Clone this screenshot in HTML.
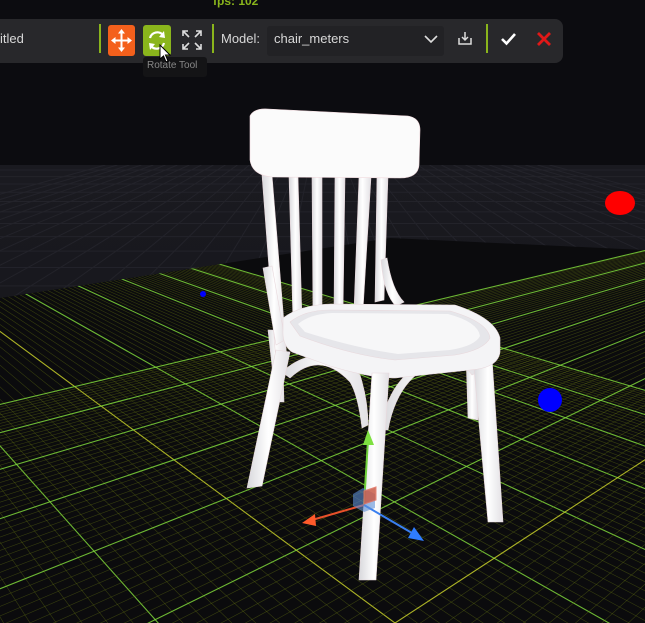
<!DOCTYPE html>
<html><head><meta charset="utf-8"><style>
html,body{margin:0;padding:0;background:#0c0c10;width:645px;height:623px;overflow:hidden;font-family:"Liberation Sans",sans-serif;position:relative}
#s{position:absolute;left:0;top:0}
.tb{position:absolute;left:-10px;top:19px;width:573px;height:44px;background:#28282b;border-radius:8px;}
.t{position:absolute;color:#d8d8d8;font-size:13px}
.sep{position:absolute;top:24px;width:2px;height:29px;background:#8ab51c}
</style></head><body>
<svg id="s" width="645" height="623" viewBox="0 0 645 623" xmlns="http://www.w3.org/2000/svg">
<defs>
<linearGradient id="fl" x1="0" y1="0" x2="0" y2="1"><stop offset="0" stop-color="#1a1a20"/><stop offset="1" stop-color="#121216"/></linearGradient>
<clipPath id="gc"><polygon points="0,298 390,238 645,250 645,623 0,623"/></clipPath>
<clipPath id="fc"><rect x="0" y="165" width="645" height="140"/></clipPath>
<linearGradient id="lg" x1="0" y1="0" x2="1" y2="0"><stop offset="0" stop-color="#d8d8dc"/><stop offset=".5" stop-color="#fff"/><stop offset="1" stop-color="#e2e0e4"/></linearGradient>
</defs>
<rect x="0" y="0" width="645" height="165" fill="#0c0c10"/>
<rect x="0" y="165" width="645" height="458" fill="url(#fl)"/>
<g id="far" clip-path="url(#fc)" stroke="#2a2a32" stroke-width="1" opacity=".6"></g>
<polygon points="0,298 390,238 645,250 645,623 0,623" fill="#0b0b0d"/>
<g id="grid" clip-path="url(#gc)"></g>
<ellipse cx="620" cy="203" rx="15" ry="12" fill="#f00"/>
<circle cx="550" cy="400" r="12" fill="#00f"/>
<circle cx="203" cy="294" r="3" fill="#00f"/>
<g fill="url(#lg)" stroke="#e8d8dc" stroke-width=".6">
<path d="M268,330 L282,330 L284,402 L276,402 Z"/>
<path d="M466,355 L478,355 L478,420 L468,418 Z"/>
<path d="M262,175 L272,175 L287,360 L276,362 Z"/>
<path d="M289,176 L298,176 L302,320 L293,322 Z"/>
<path d="M312,177 L322,177 L322,315 L313,315 Z"/>
<path d="M335,177 L345,177 L343,312 L334,312 Z"/>
<path d="M359,177 L371,177 L363,310 L354,310 Z"/>
<path d="M377,176 L388,176 L384,300 L375,302 Z"/>
<path d="M263,268 L272,266 L285,340 L276,345 Z"/>
<path d="M381,260 L387,258 Q392,290 404,302 L396,306 Q384,295 381,260 Z"/>
<path d="M250,116 Q254,108 268,109 L408,116 Q420,118 420,130 L419,165 Q418,178 400,178 L272,177 Q252,175 250,160 Z" fill="#fbfbfb" stroke="#f0d8dc"/>
<path d="M282,372 Q320,338 360,375 Q368,400 368,425 L362,428 Q358,395 350,382 Q320,350 290,378 Z"/>
<path d="M380,430 Q390,370 440,355 Q470,352 478,372 L472,375 Q462,360 440,362 Q398,375 388,430 Z"/>
<path d="M276,350 L290,352 L262,486 L247,488 Z"/>
<path d="M473,358 L492,358 L503,522 L488,522 Z"/>
<path d="M283,318 Q300,305 330,304 L455,305 Q495,318 500,338 L500,352 Q498,368 470,370 L395,378 Q370,378 330,366 L292,352 Q282,345 283,330 Z" fill="#f4f4f6"/>
<path d="M290,322 Q305,310 330,310 L450,311 Q488,322 490,338 Q484,350 455,355 L395,360 Q350,355 300,336 Z" fill="#e6e6ea"/>
<path d="M298,324 Q310,314 332,313 L448,314 Q478,322 480,336 Q475,346 450,350 L398,354 Q355,348 305,332 Z" fill="#f7f7f8" stroke="none"/>
<path d="M372,373 L389,373 L376,580 L359,580 Z"/>
</g>
<g stroke-width="2">
<line x1="364" y1="505" x2="368" y2="440" stroke="#6fd13a"/>
<polygon points="368,430 363,445 374,445" fill="#7ee040"/>
<line x1="364" y1="505" x2="312" y2="520" stroke="#e8502a"/>
<polygon points="302,523 315,514 316,526" fill="#ff5a2a"/>
<line x1="364" y1="505" x2="412" y2="533" stroke="#3a7ff0"/>
<polygon points="424,541 408,538 414,527" fill="#2f7dff"/>
<polygon points="353,494 363,488 375,494 375,508 364,512 353,506" fill="#5b8dd6" opacity=".6" stroke="none"/>
<polygon points="364,491 376,487 376,500 364,504" fill="#c85c48" opacity=".85" stroke="#e07060" stroke-width="1"/>
</g>
</svg>
<script>
(function(){
var g=document.getElementById('grid'),ns='http://www.w3.org/2000/svg';
function L(x1,y1,x2,y2,c,w,o){var l=document.createElementNS(ns,'line');l.setAttribute('x1',x1);l.setAttribute('y1',y1);l.setAttribute('x2',x2);l.setAttribute('y2',y2);l.setAttribute('stroke',c);l.setAttribute('stroke-width',w);l.setAttribute('opacity',o);g.appendChild(l);}
var A={x:-300,y:110},B={x:1150,y:130};
var step=26;
for(var i=-60;i<=60;i++){
 var bx=395+i*step, by=623+i*step*0.1;
 var dx=bx-A.x,dy=by-A.y;
 var ex=A.x+dx*2.2,ey=A.y+dy*2.2;
 var maj=(i%10==0);
 L(A.x,A.y,ex,ey,i==0?'#c8d02a':(maj?'#7fd63a':'#6a7a12'),maj?1.1:0.6,maj?0.85:0.45);
}
for(var i=-60;i<=60;i++){
 var bx=395+i*step*1.05, by=623-i*step*0.05;
 var dx=bx-B.x,dy=by-B.y;
 var ex=B.x+dx*2.2,ey=B.y+dy*2.2;
 var maj=(i%10==0);
 L(B.x,B.y,ex,ey,i==0?'#c8d02a':(maj?'#7fd63a':'#6a7a12'),maj?1.1:0.6,maj?0.85:0.45);
}
var f=document.getElementById('far');
for(var y=170;y<305;y+=6+(y-165)*0.12){var l=document.createElementNS(ns,'line');l.setAttribute('x1',0);l.setAttribute('x2',645);l.setAttribute('y1',y);l.setAttribute('y2',y);f.appendChild(l);}
for(var x=-400;x<1100;x+=40){var l=document.createElementNS(ns,'line');l.setAttribute('x1',322+(x-322)*0.3);l.setAttribute('y1',165);l.setAttribute('x2',x);l.setAttribute('y2',305);f.appendChild(l);}
})();
</script>
<div style="position:absolute;left:213px;top:-6px;color:#8ab51c;font-weight:bold;font-size:12px;line-height:14px">fps: 102</div>
<div class="tb"></div>
<div class="t" style="left:0;top:31px">itled</div>
<div class="sep" style="left:99px"></div>
<div style="position:absolute;left:108px;top:25px;width:27px;height:31px;background:#f4601c;border-radius:3px"></div>
<svg style="position:absolute;left:108px;top:25px" width="27" height="31" viewBox="0 0 27 31"><g fill="#fff" stroke="#fff" stroke-width="2"><line x1="5" y1="15.5" x2="22" y2="15.5"/><line x1="13.5" y1="7" x2="13.5" y2="24"/></g><g fill="#fff"><polygon points="13.5,4 10,8.5 17,8.5"/><polygon points="13.5,27 10,22.5 17,22.5"/><polygon points="3,15.5 7.5,12 7.5,19"/><polygon points="24,15.5 19.5,12 19.5,19"/></g></svg>
<div style="position:absolute;left:143px;top:25px;width:28px;height:31px;background:#8ab51c;border-radius:3px"></div>
<svg style="position:absolute;left:143px;top:25px" width="28" height="31" viewBox="0 0 28 31"><g fill="none" stroke="#fff" stroke-width="2.2"><path d="M7,13 A7.5,7.5 0 0 1 20,10"/><path d="M21,18 A7.5,7.5 0 0 1 8,21"/></g><polygon points="21,6 22,13 16,12" fill="#fff"/><polygon points="7,25 6,18 12,19" fill="#fff"/></svg>
<svg style="position:absolute;left:181px;top:29px;" width="22" height="22" viewBox="0 0 22 22"><g fill="none" stroke="#ddd" stroke-width="1.6"><path d="M2,7 V2 H7 M2,2 L8,8"/><path d="M15,2 H20 V7 M20,2 L14,8"/><path d="M2,15 V20 H7 M2,20 L8,14"/><path d="M20,15 V20 H15 M20,20 L14,14"/></g></svg>
<div class="sep" style="left:212px"></div>
<div class="t" style="left:221px;top:31px">Model:</div>
<div style="position:absolute;left:267px;top:26px;width:177px;height:30px;background:#222225;border-radius:3px"></div>
<div class="t" style="left:274px;top:31px">chair_meters</div>
<svg style="position:absolute;left:423px;top:33px" width="16" height="12"><path d="M2,3 L8,9 L14,3" fill="none" stroke="#ddd" stroke-width="1.6"/></svg>
<svg style="position:absolute;left:458px;top:30px" width="14" height="16" viewBox="0 0 14 16"><g fill="none" stroke="#ddd" stroke-width="1.5"><path d="M1,8 V14 H13 V8"/><path d="M7,2 V10 M4,7 L7,10 L10,7"/></g></svg>
<div class="sep" style="left:486px"></div>
<svg style="position:absolute;left:500px;top:31px" width="17" height="16"><path d="M2,8 L6.5,12.5 L15,3" fill="none" stroke="#fff" stroke-width="2.6"/></svg>
<svg style="position:absolute;left:536px;top:31px" width="16" height="16"><path d="M2,2 L14,14 M14,2 L2,14" stroke="#e01818" stroke-width="2.8"/></svg>
<div style="position:absolute;left:143px;top:57px;width:64px;height:20px;background:#141416;border-radius:3px"></div>
<div style="position:absolute;left:147px;top:60px;color:#888;font-size:10px">Rotate Tool</div>
<svg style="position:absolute;left:158px;top:44px" width="14" height="20"><path d="M2,1 L2,15 L5.5,12 L8,18 L10,17 L7.5,11 L12,11 Z" fill="#fff" stroke="#000" stroke-width="1"/></svg>
</body></html>
